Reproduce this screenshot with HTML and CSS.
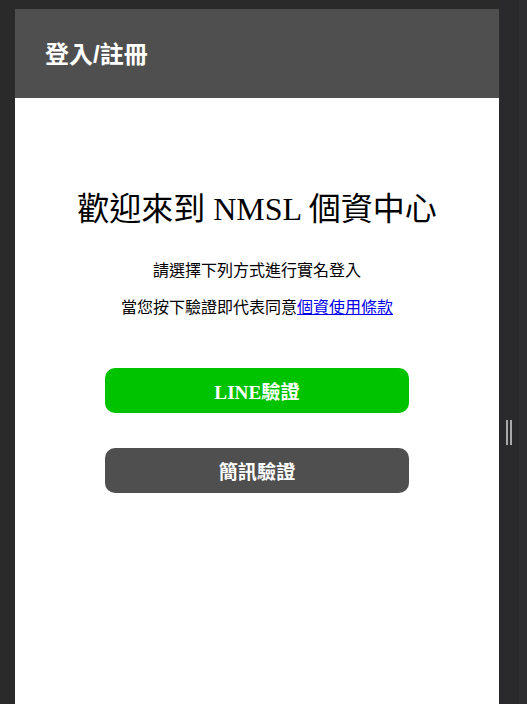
FILE: index.html
```html
<!DOCTYPE html>
<html lang="zh-Hant">
<head>
<meta charset="utf-8">
<title>登入/註冊</title>
<link rel="stylesheet" href="styles.css">
</head>
<body>
<div class="stage">
  <div class="card">
    <header class="topbar"><h2 class="topbar-title">登入/註冊</h2></header>
    <main class="content">
      <h1 class="welcome">歡迎來到 NMSL 個資中心</h1>
      <p class="hint">請選擇下列方式進行實名登入</p>
      <p class="hint hint-second">當您按下驗證即代表同意<a href="#" class="terms">個資使用條款</a></p>
      <div class="actions">
        <button class="btn btn-line" type="button">LINE驗證</button>
        <button class="btn btn-sms" type="button">簡訊驗證</button>
      </div>
    </main>
  </div>
  <div class="side">
    <span class="grip"></span>
  </div>
</div>
</body>
</html>
```
FILE: styles.css
```css
html, body {
  margin: 0;
  padding: 0;
  height: 100%;
  overflow: hidden;
}
body {
  background: #2a2a2b;
}
.stage {
  display: flex;
  height: 704px;
  padding: 9px 0 0 15px;
  box-sizing: border-box;
}
.card {
  width: 484px;
  background: #ffffff;
  display: flex;
  flex-direction: column;
}
.topbar {
  height: 89px;
  background: #4f4f4f;
  display: flex;
  align-items: center;
  padding-left: 30px;
}
.topbar-title {
  margin: 0;
  color: #ffffff;
  font-family: "Liberation Sans", "Noto Sans CJK TC", sans-serif;
  font-weight: bold;
  font-size: 24px;
  line-height: 30px;
  padding-top: 2px;
}
.content {
  display: flex;
  flex-direction: column;
  align-items: center;
  text-align: center;
  font-family: "Liberation Serif", "Noto Sans CJK TC", serif;
  color: #000;
}
.welcome {
  margin: 91px 0 0;
  font-size: 32px;
  font-weight: normal;
  line-height: 40px;
}
.hint {
  margin: 30px 0 0;
  font-size: 16px;
  line-height: 24px;
}
.hint-second {
  margin-top: 13px;
}
.terms {
  color: #0000ee;
  text-decoration: underline;
}
.actions {
  display: flex;
  flex-direction: column;
  gap: 35px;
  margin-top: 48px;
}
.btn {
  width: 304px;
  height: 45px;
  border: none;
  border-radius: 10px;
  color: #ffffff;
  font-size: 19.2px;
  font-weight: bold;
  padding: 0;
  cursor: pointer;
}
.btn-line {
  background: #00c300;
  font-family: "Liberation Serif", "Noto Sans CJK TC", serif;
}
.btn-sms {
  background: #4f4f4f;
  font-family: "Liberation Sans", "Noto Sans CJK TC", sans-serif;
}
.side {
  flex: 1;
  display: flex;
  align-items: flex-start;
  justify-content: center;
  padding: 420px 8px 0 0;
  background: linear-gradient(to right, #2a2a2c 0, #2a2a2c 20px, #2e2e30 20px);
  margin-top: -9px;
  box-sizing: border-box;
}
.grip {
  width: 2px;
  height: 25px;
  border-left: 2px solid #a9a9a9;
  border-right: 2px solid #a9a9a9;
}
```
